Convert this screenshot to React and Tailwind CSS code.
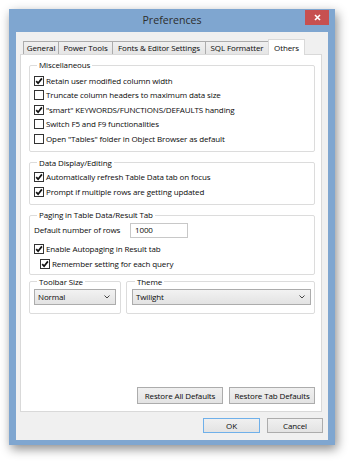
import React from "react";

const FONT = { fontFamily: '"Open Sans", "Noto Sans", sans-serif' };

function Check({ checked }) {
  return (
    <span className="w-[10px] h-[10px] shrink-0 border border-[#333333] bg-white flex items-center justify-center">
      {checked && (
        <svg width="8" height="8" viewBox="0 0 8 8">
          <path d="M1.2 4.2 L3.1 6.2 L6.9 1.4" fill="none" stroke="#111" strokeWidth="1.7" />
        </svg>
      )}
    </span>
  );
}

function Row({ checked, children, className = "" }) {
  return (
    <div className={"flex items-center gap-[2px] h-[14.5px] " + className}>
      <Check checked={checked} />
      <span className="whitespace-nowrap">{children}</span>
    </div>
  );
}

function Group({ title, className = "", children }) {
  return (
    <fieldset className={"border border-[#dcdcdc] rounded-[2px] " + className}>
      <legend className="ml-[3px] px-[2px] leading-[12px]">{title}</legend>
      {children}
    </fieldset>
  );
}

function Select({ value }) {
  return (
    <div className="h-[16px] flex items-center justify-between pl-[3px] pr-[5px] border border-[#acacac] bg-gradient-to-b from-[#f2f2f2] to-[#e3e3e3]">
      <span>{value}</span>
      <svg width="6" height="4" viewBox="0 0 6 4">
        <path d="M0.5 0.5 L3 3 L5.5 0.5" fill="none" stroke="#444" strokeWidth="1" />
      </svg>
    </div>
  );
}

function Btn({ children, className = "" }) {
  return (
    <div
      className={
        "flex items-center justify-center whitespace-nowrap border bg-gradient-to-b from-[#f0f0f0] to-[#e3e3e3] " + className
      }
    >
      {children}
    </div>
  );
}

export default function App() {
  const tabs = [
    ["General", "w-[36px]"],
    ["Power Tools", "w-[55px]"],
    ["Fonts & Editor Settings", "w-[94px]"],
    ["SQL Formatter", "w-[64px]"],
  ];
  return (
    <div
      className="w-[350px] h-[462px] bg-white pt-[9px] pl-[9px] text-[8px] tracking-[-0.12px] text-[#0a0a0a]"
      style={FONT}
    >
      <div className="w-[326px] h-[436px] bg-[#7fa6d0] flex flex-col shadow-[2px_4px_10px_rgba(0,0,0,0.45)]">
        {/* title bar */}
        <div className="h-[23px] grid grid-cols-[1fr_auto_1fr]">
          <div />
          <div className="self-center text-[10.6px] tracking-normal text-[#2d2d2d] pt-[1px]">Preferences</div>
          <div className="justify-self-end mt-[1px] mr-[6px] w-[24px] h-[15px] bg-[#c75050] flex items-center justify-center">
            <svg width="7" height="7" viewBox="0 0 7 7">
              <path d="M1 1 L6 6 M6 1 L1 6" stroke="white" strokeWidth="1.6" />
            </svg>
          </div>
        </div>
        {/* client */}
        <div className="mx-[7px] h-[408px] bg-[#f0f0f0] flex flex-col">
          <div className="ml-[4px] mr-[6px] mt-[7px]">
            <div className="flex items-end h-[15px] pl-[3px]">
              {tabs.map(([t, w]) => (
                <div
                  key={t}
                  className={
                    w +
                    " h-[13px] border border-b-0 border-[#acacac] -ml-[1px] first:ml-0 bg-gradient-to-b from-[#f0f0f0] to-[#e5e5e5] flex items-center justify-center whitespace-nowrap"
                  }
                >
                  {t}
                </div>
              ))}
              <div className="w-[37px] h-[16px] -mb-[1px] -ml-[1px] relative z-10 border border-b-0 border-[#d9d9d9] bg-white flex items-start pt-[1.5px] justify-center">
                Others
              </div>
            </div>
            {/* panel */}
            <div className="h-[358px] bg-white border border-[#d9d9d9] flex flex-col pl-[8px] pr-[6px]">
              <Group title="Miscellaneous" className="mt-[4px] pl-[4px] pt-[2.5px] pb-[4.5px]">
                <Row checked>Retain user modified column width</Row>
                <Row>Truncate column headers to maximum data size</Row>
                <Row checked>"smart" KEYWORDS/FUNCTIONS/DEFAULTS handing</Row>
                <Row>Switch F5 and F9 functionalities</Row>
                <Row>Open "Tables" folder in Object Browser as default</Row>
              </Group>
              <Group title="Data Display/Editing" className="mt-[5px] pl-[4px] pt-[0.5px] pb-[3.5px]">
                <Row checked className="!h-[15.5px]">Automatically refresh Table Data tab on focus</Row>
                <Row checked className="!h-[15.5px]">Prompt if multiple rows are getting updated</Row>
              </Group>
              <Group title="Paging in Table Data/Result Tab" className="mt-[4.5px] pl-[4px] pt-[1.5px] pb-[2.5px]">
                <div className="flex items-center h-[15px]">
                  <span className="w-[96px] shrink-0 whitespace-nowrap">Default number of rows</span>
                  <div className="w-[58px] h-[15px] border border-[#c8c8c8] flex items-center pl-[4px]">1000</div>
                </div>
                <Row checked className="mt-[3.5px] !h-[15px]">Enable Autopaging in Result tab</Row>
                <Row checked className="ml-[6px] !h-[15px]">Remember setting for each query</Row>
              </Group>
              <div className="mt-[1px] flex gap-[5px]">
                <Group title="Toolbar Size" className="w-[92px] px-[4px] pt-[1px] pb-[8px]">
                  <Select value="Normal" />
                </Group>
                <Group title="Theme" className="flex-1 pl-[5px] pr-[3px] pt-[1px] pb-[8px]">
                  <Select value="Twilight" />
                </Group>
              </div>
              <div className="mt-auto mb-[7px] flex justify-end gap-[6px]">
                <Btn className="w-[86px] h-[17px] border-[#acacac]">Restore All Defaults</Btn>
                <Btn className="w-[86px] h-[17px] border-[#acacac]">Restore Tab Defaults</Btn>
              </div>
            </div>
          </div>
          <div className="mt-[6px] mr-[5px] flex justify-end gap-[7px]">
            <Btn className="w-[57px] h-[15px] border-[#6fb0ea]">OK</Btn>
            <Btn className="w-[56px] h-[15px] border-[#acacac]">Cancel</Btn>
          </div>
        </div>
      </div>
    </div>
  );
}
